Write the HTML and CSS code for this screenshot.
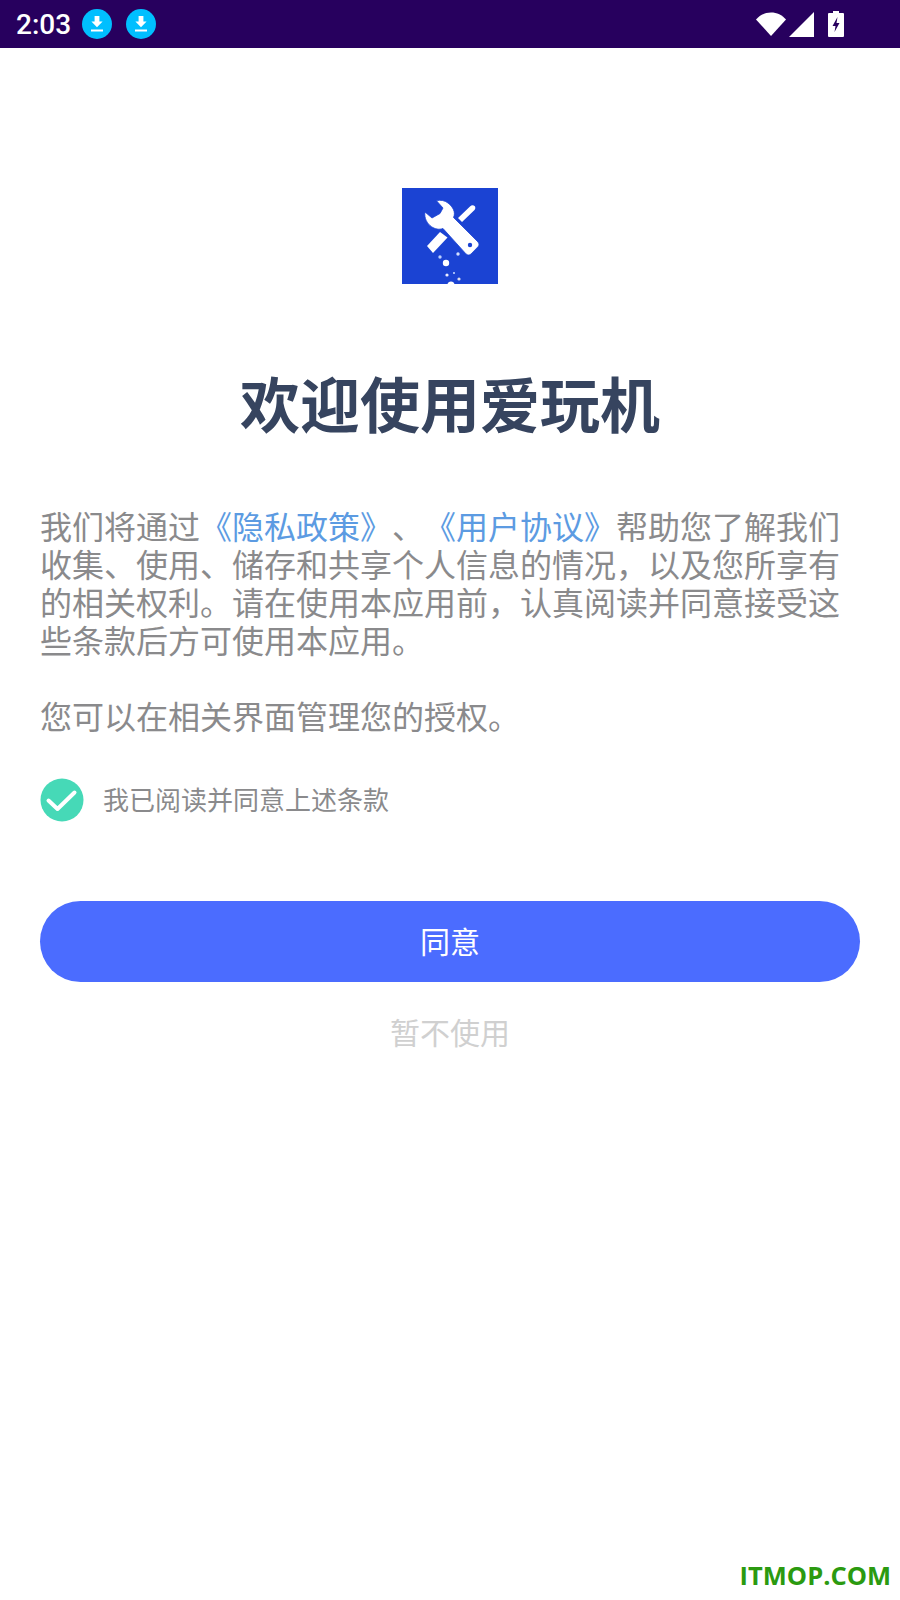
FILE: index.html
```html
<!DOCTYPE html>
<html lang="zh-CN">
<head>
<meta charset="utf-8">
<title>欢迎使用爱玩机</title>
<link rel="stylesheet" href="styles.css">
</head>
<body>
<div class="screen">
  <header class="status">
    <div class="status-left">
      <span class="time">2:03</span>
      <svg class="dl" viewBox="0 0 30 30"><circle cx="15" cy="15" r="15" fill="#00bfff"/><path d="M12.6 7h4.8v5.6h3.200L15 18.200l-5.600-5.600h3.200zM9 20.500h12v2H9z" fill="#fff"/></svg>
      <svg class="dl" viewBox="0 0 30 30"><circle cx="15" cy="15" r="15" fill="#00bfff"/><path d="M12.6 7h4.8v5.6h3.200L15 18.200l-5.600-5.600h3.200zM9 20.500h12v2H9z" fill="#fff"/></svg>
    </div>
    <div class="status-right">
      <svg class="wifi" viewBox="0 0 30 26"><path d="M0 8.500C4 4 9 1.500 15 1.500S26 4 30 8.500L15 25z" fill="#fff"/></svg>
      <svg class="signal" viewBox="0 0 25 25"><path d="M25 0v25H0z" fill="#fff"/></svg>
      <svg class="battery" viewBox="0 0 16 26"><path d="M5 0h6v2h4a1 1 0 0 1 1 1v22a1 1 0 0 1-1 1H1a1 1 0 0 1-1-1V3a1 1 0 0 1 1-1h4z" fill="#fff"/><path d="M9.500 6 4.500 15h3l-1 6 5-9h-3z" fill="#27005e"/></svg>
    </div>
  </header>
  <main class="content">
    <svg class="logo" viewBox="0 0 96 96">
      <rect width="96" height="96" fill="#1b43d3"/>
      <path d="M68 18.500c1.500-1.500 3.500-1.500 4.600-.4 1 1 1 2.700-.1 3.900L60 34l-4-4z" fill="#fff"/>
      <path d="M38 44l7.500 5.500L31 65l-6-7z" fill="#fff"/>
      <path d="M34.500 12.800c4-1 8-.5 11.500 2.200 5 3.800 8 9.500 5.500 14.500L76 54c1.300 1.400 1.300 3.400 0 4.800L69 66c-1.500 1.400-3.500 1.400-5-.1L41 40.500c-4 1.500-8 .5-11.500-1.800C25 35.500 22 30 23 24l7 6 8-4.500 3-5.500z" fill="#fff" stroke="#1b43d3" stroke-width="0.800"/>
      <circle cx="68" cy="57" r="2.200" fill="#1b43d3"/>
      <circle cx="38" cy="69" r="1.700" fill="#bcd0ff"/>
      <circle cx="56" cy="66" r="1.700" fill="#d5e0ff"/>
      <circle cx="44" cy="75" r="3.200" fill="#fff"/>
      <circle cx="45" cy="87" r="1.600" fill="#eef"/>
      <circle cx="52" cy="85" r="1" fill="#cdf"/>
      <circle cx="57" cy="91" r="1.600" fill="#dde"/>
      <circle cx="49" cy="97" r="3.500" fill="#fff"/>
    </svg>
    <h1 class="title">欢迎使用爱玩机</h1>
    <div class="terms">
      <p>我们将通过<a class="link">《隐私政策》</a>、<a class="link">《用户协议》</a>帮助您了解我们收集、使用、储存和共享个人信息的情况，以及您所享有的相关权利。请在使用本应用前，认真阅读并同意接受这些条款后方可使用本应用。</p>
      <p class="grant">您可以在相关界面管理您的授权。</p>
    </div>
    <div class="agree">
      <svg class="check" viewBox="0 0 44 44"><circle cx="22" cy="22" r="21.500" fill="#46d9b7"/><path d="M8.500 22.500 17.500 31 34.500 14.500" fill="none" stroke="#fff" stroke-width="4" stroke-linecap="round" stroke-linejoin="round"/></svg>
      <span class="agree-text">我已阅读并同意上述条款</span>
    </div>
    <button class="primary">同意</button>
    <div class="later">暂不使用</div>
  </main>
  <footer class="mark">ITMOP.COM</footer>
</div>
</body>
</html>
```
FILE: styles.css
```css
* { box-sizing: border-box; }
html, body { margin: 0; padding: 0; background: #fff; }
body { font-family: "Noto Sans CJK SC", "Noto Sans", sans-serif; }
.screen { width: 900px; height: 1600px; display: flex; flex-direction: column; overflow: hidden; }
.status { height: 48px; flex: none; background: #27005e; display: flex; justify-content: space-between; align-items: center; padding: 0 56px 0 16px; }
.status-left { display: flex; align-items: center; }
.time { font-family: Roboto, sans-serif; font-size: 28px; font-weight: 500; color: #fff; width: 66px; }
.dl { width: 30px; height: 30px; margin-right: 14px; display: block; }
.status-right { display: flex; align-items: center; }
.wifi { width: 30px; height: 26px; display: block; margin-right: 3px; }
.signal { width: 25px; height: 25px; display: block; margin: 1px 14px 0 0; }
.battery { width: 16px; height: 26px; display: block; }
.content { flex: 1; display: flex; flex-direction: column; align-items: center; padding: 140px 40px 0; }
.logo { width: 96px; height: 96px; display: block; flex: none; }
.title { margin: 74px 0 0; font-size: 60px; line-height: 88px; font-weight: 700; color: #36445f; }
.terms { width: 100%; margin-top: 60px; font-size: 32px; line-height: 38px; color: #8a8a8c; text-spacing-trim: space-all; font-kerning: none; }
.terms p { margin: 0; }
.terms .grant { margin-top: 38px; }
.link { color: #5c9be2; }
.agree { width: 100%; display: flex; align-items: center; margin-top: 44px; }
.check { width: 44px; height: 44px; display: block; flex: none; }
.agree-text { margin: -3px 0 0 19px; font-size: 26px; line-height: 44px; color: #8a8a8c; }
.primary { width: 820px; height: 81px; flex: none; margin-top: 79px; padding: 0 0 3px; border: 0; border-radius: 41px; background: #4b6cff; color: #fff; font: inherit; font-size: 30px; }
.later { margin-top: 27px; font-size: 30px; line-height: 44px; color: #d0d0d0; }
.mark { height: 45px; flex: none; text-align: right; padding-right: 9px; font-family: "Open Sans", sans-serif; font-weight: 700; font-size: 25.500px; line-height: 40px; color: #2b9a10; }
```
